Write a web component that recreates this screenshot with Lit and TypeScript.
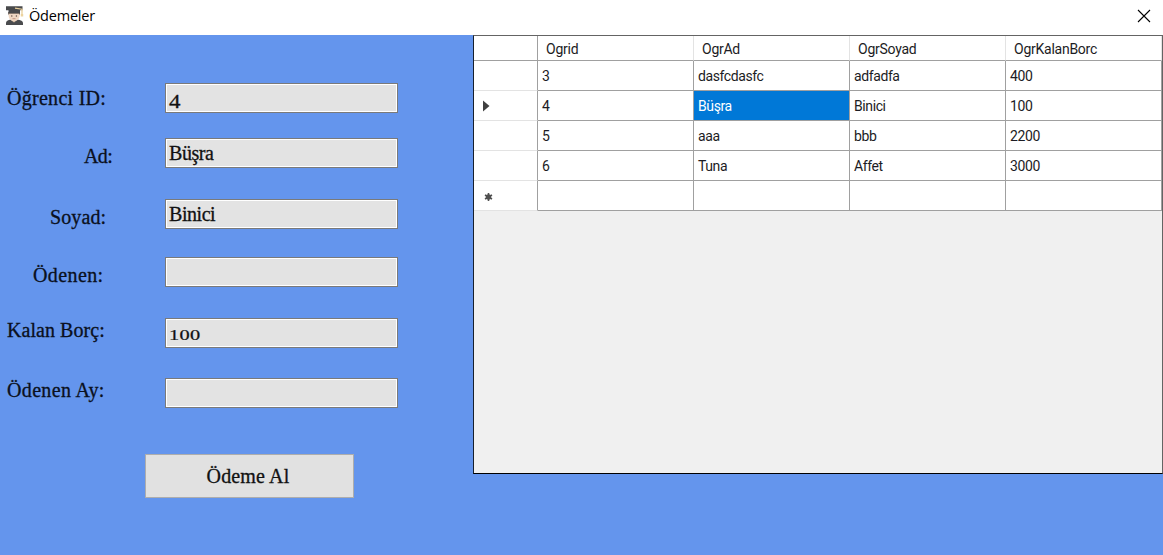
import { LitElement, html, css } from "lit";
import { customElement } from "lit/decorators.js";
import { classMap } from "lit/directives/class-map.js";

interface Field {
  key: string;
  label: string;
  value: string;
  figures?: string;
}

const FIELDS: Field[] = [
  { key: "id", label: "Öğrenci ID:", value: "4", figures: "descending" },
  { key: "ad", label: "Ad:", value: "Büşra" },
  { key: "soyad", label: "Soyad:", value: "Binici" },
  { key: "odenen", label: "Ödenen:", value: "" },
  { key: "kalan", label: "Kalan Borç:", value: "100", figures: "small" },
  { key: "ay", label: "Ödenen Ay:", value: "" },
];

const COLUMNS = ["Ogrid", "OgrAd", "OgrSoyad", "OgrKalanBorc"];

const ROWS = [
  ["3", "dasfcdasfc", "adfadfa", "400"],
  ["4", "Büşra", "Binici", "100"],
  ["5", "aaa", "bbb", "2200"],
  ["6", "Tuna", "Affet", "3000"],
  ["", "", "", ""],
];

@customElement("title-bar")
class TitleBar extends LitElement {
  static styles = css`
    :host {
      display: flex;
      align-items: center;
      box-sizing: border-box;
      height: 35px;
      padding: 0 12px 3px 5px;
      background: #fff;
      color: #000;
      font: 14.5px/20px "Open Sans", "Noto Sans", sans-serif;
    }
    .title {
      flex: 1;
      margin-left: 5px;
      letter-spacing: -0.2px;
    }
    .student {
      width: 19px;
      height: 21px;
      margin-bottom: 2px;
    }
    .close {
      width: 14px;
      height: 14px;
    }
  `;

  render() {
    return html`
      <svg class="student" viewBox="0 0 19 21">
        <path d="M1 20v-2q0-3 5-3.600h6q6 .6 6 3.600v2z" fill="#4a4b4e" />
        <path d="M6.500 13h5v2.500l-2.500 2-2.500-2z" fill="#d9c0a8" />
        <path d="M3.600 8h11v3q-.6 5-5.500 5t-5.500-5z" fill="#efd7c3" />
        <path d="M3.300 10V7h11.500v3l-1-1.500h-9.500z" fill="#4d4038" />
        <circle cx="6.800" cy="11" r=".7" fill="#5d4b42" />
        <circle cx="11.400" cy="11" r=".7" fill="#5d4b42" />
        <path d="M7.500 13.700h3" stroke="#b98574" stroke-width=".8" />
        <path d="M1 1.200h16.500v4H15v3H3.500v-3H1z" fill="#48494b" />
        <path d="M10 3.200l7 1v6" fill="none" stroke="#e8cf9c" stroke-width="1.300" />
        <path d="M15.800 9h2.400v2.500h-2.400z" fill="#ecd3a0" />
      </svg>
      <span class="title">Ödemeler</span>
      <svg class="close" viewBox="0 0 14 14">
        <path d="M1 1l12 12M13 1l-12 12" stroke="#000" stroke-width="1.100" />
      </svg>
    `;
  }
}

@customElement("payment-form")
class PaymentForm extends LitElement {
  static styles = css`
    :host {
      display: flex;
      flex-direction: column;
      align-items: flex-start;
      box-sizing: border-box;
      width: 473px;
      padding-top: 48px;
      color: #0a1020;
      font: 20px/24px "Liberation Serif", serif;
    }
    .row {
      display: grid;
      grid-template-columns: 165px 233px;
      align-items: start;
      height: 30px;
    }
    .label {
      white-space: nowrap;
      padding-left: 7px;
      padding-top: 3px;
      -webkit-text-stroke: 0.3px;
    }
    .box {
      box-sizing: border-box;
      height: 30px;
      padding: 2px 3px;
      border: 1px solid #7a7a7a;
      box-shadow: inset 0 0 0 1px #fff;
      background: #e3e3e3;
      color: #111;
      -webkit-text-stroke: 0.3px;
    }
    .id .label { letter-spacing: 0.28px; }
    .ad { margin-top: 25px; }
    .ad .label { padding-left: 84px; padding-top: 6px; letter-spacing: -0.6px; }
    .soyad { margin-top: 31px; }
    .soyad .label { padding-left: 50px; padding-top: 6px; letter-spacing: 0.1px; }
    .odenen { margin-top: 28px; }
    .odenen .label { padding-left: 33px; padding-top: 6px; letter-spacing: 0.4px; }
    .kalan { margin-top: 31px; }
    .kalan .label { padding-top: 0; letter-spacing: 0.05px; }
    .ay { margin-top: 30px; }
    .ay .label { padding-top: 0; letter-spacing: 0.35px; }
    .value {
      display: inline-block;
      transform-origin: left 18px;
      letter-spacing: -0.45px;
    }
    .descending { padding-top: 3px; transform: scale(1.15, 0.95); }
    .small { padding-top: 1px; letter-spacing: 0.3px; transform: scale(1.02, 0.72); }
    .pay {
      box-sizing: border-box;
      width: 209px;
      height: 44px;
      margin: 46px 0 0 145px;
      padding: 0 3px 0 0;
      border: 1px solid #adadad;
      background: #e1e1e1;
      color: #111;
      font: inherit;
      letter-spacing: 0.15px;
      -webkit-text-stroke: 0.3px;
    }
  `;

  render() {
    return html`
      ${FIELDS.map(
        (f) => html`
          <div class="row ${f.key}">
            <span class="label">${f.label}</span>
            <div class="box"><span class="value ${f.figures ?? ""}">${f.value}</span></div>
          </div>
        `
      )}
      <button class="pay">Ödeme Al</button>
    `;
  }
}

@customElement("data-grid")
class DataGrid extends LitElement {
  static styles = css`
    :host {
      display: block;
      box-sizing: border-box;
      flex: 1;
      height: 439px;
      border: 1px solid #646464;
      border-left-color: #17202e;
      border-bottom-color: #000;
      background: #f0f0f0;
      color: #1c1c24;
      font: 14px/18px Roboto, sans-serif;
    }
    .line {
      display: grid;
      grid-template-columns: 64px repeat(4, 156px);
      height: 30px;
    }
    .head {
      height: 25px;
    }
    .cell,
    .marker,
    .name {
      box-sizing: border-box;
      background: #fff;
      white-space: nowrap;
      border-right: 1px solid #a0a0a0;
      border-bottom: 1px solid #a0a0a0;
    }
    .cell {
      padding: 6px 0 0 4px;
      letter-spacing: -0.4px;
    }
    .marker {
      display: flex;
      align-items: center;
      border-bottom-color: #e3e3e3;
      padding-left: 8px;
    }
    .head .marker {
      border-bottom-color: #a0a0a0;
    }
    .name {
      padding: 4px 0 0 8px;
      border-right-color: #e3e3e3;
      letter-spacing: -0.25px;
    }
    .selected {
      background: #0078d7;
      color: #fff;
    }
  `;

  marker(index: number) {
    if (index === 1)
      return html`<svg width="8" height="12" viewBox="0 0 8 12">
        <path d="M1 0.500l6.500 5.500-6.500 5.500z" fill="#404040" />
      </svg>`;
    if (index === ROWS.length - 1)
      return html`<svg width="14" height="10" viewBox="0 -2 14 10">
        <path d="M6.500 0v8M3 2l7 4M10 2l-7 4" stroke="#505050" stroke-width="1.600" />
        <circle cx="6.500" cy="4" r="2.700" fill="#505050" />
      </svg>`;
    return "";
  }

  render() {
    return html`
      <div class="line head">
        <div class="marker"></div>
        ${COLUMNS.map((c) => html`<div class="name">${c}</div>`)}
      </div>
      ${ROWS.map(
        (row, r) => html`
          <div class="line">
            <div class="marker">${this.marker(r)}</div>
            ${row.map(
              (v, c) => html`<div class=${classMap({ cell: true, selected: r === 1 && c === 1 })}>${v}</div>`
            )}
          </div>
        `
      )}
    `;
  }
}

@customElement("app-root")
class AppRoot extends LitElement {
  static styles = css`
    :host {
      display: flex;
      flex-direction: column;
      width: 1163px;
      height: 555px;
      overflow: hidden;
      background: #6495ed;
    }
    .content {
      display: flex;
      align-items: flex-start;
      flex: 1;
    }
  `;

  render() {
    return html`
      <title-bar></title-bar>
      <div class="content">
        <payment-form></payment-form>
        <data-grid></data-grid>
      </div>
    `;
  }
}
